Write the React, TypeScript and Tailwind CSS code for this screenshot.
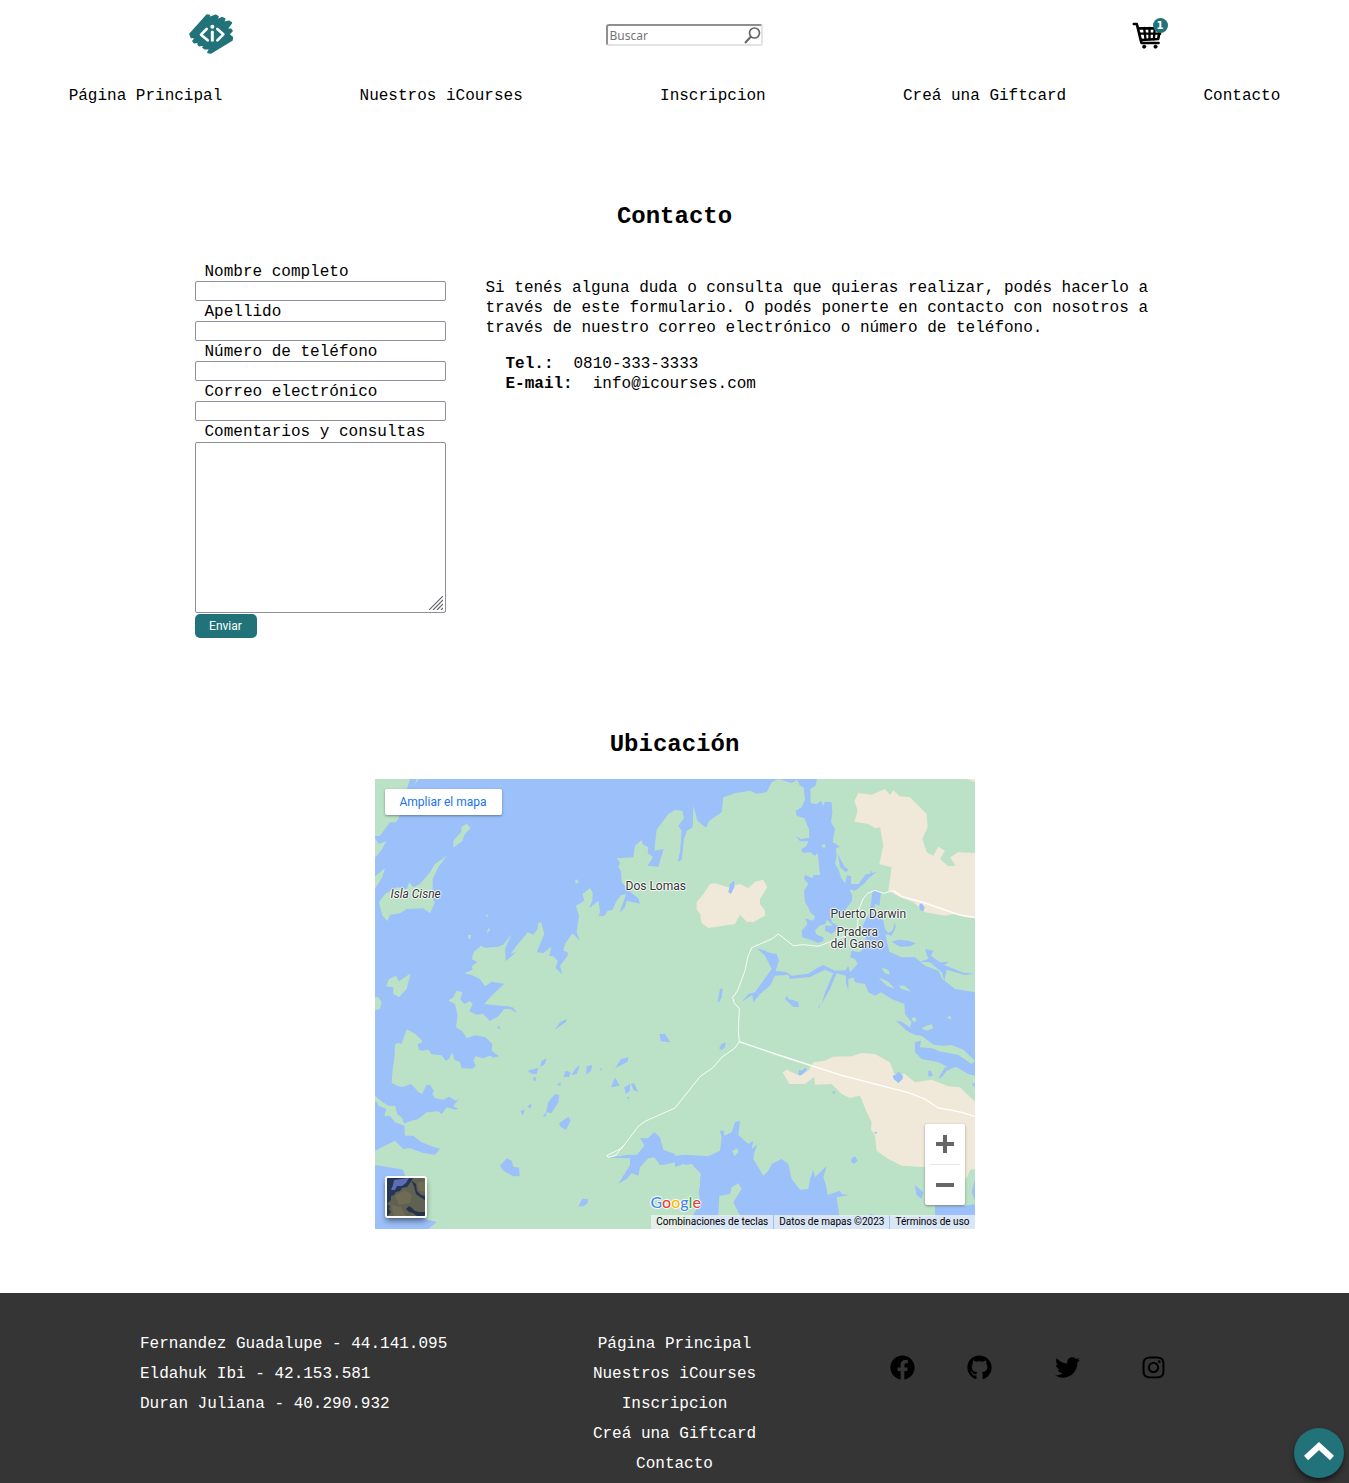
import React from "react";
import { FaFacebook, FaGithub, FaInstagram, FaTwitter } from "react-icons/fa";

const links = ["Página Principal", "Nuestros iCourses", "Inscripcion", "Creá una Giftcard", "Contacto"];
const authors = [
  "Fernandez Guadalupe - 44.141.095",
  "Eldahuk Ibi - 42.153.581",
  "Duran Juliana - 40.290.932",
];
const fields = [
  { id: "nombre", label: "Nombre completo", type: "text" },
  { id: "apellido", label: "Apellido", type: "text" },
  { id: "telefono", label: "Número de teléfono", type: "tel" },
  { id: "correo", label: "Correo electrónico", type: "email" },
];

function Logo() {
  return (
    <svg viewBox="45 30 156 150" className="h-[50px] w-[52px]" aria-hidden="true">
      <path
        d="M60 102 L111 45 L118 47 L113 55 L137 46 L144 50 L136 62 L156 53 L164 56 L160 68 L178 64 L184 69 L170 88 L183 88 L186 93 L176 103 L187 112 L186 120 L122 159 L114 157 L122 145 L104 146 L99 142 L108 133 L88 137 L84 132 L91 125 L73 128 L69 123 L78 112 L64 112Z"
        fill="#217379"
        stroke="#217379"
        strokeWidth="5"
        strokeLinejoin="round"
      />
      <g fill="none" stroke="#fff" strokeWidth="8" strokeLinecap="round" strokeLinejoin="round">
        <path d="M110 87 L93 104 L113 121" />
        <path d="M142 87 L160 103 L142 121" />
        <path d="M127 96 V121" strokeWidth="9" />
      </g>
      <circle cx="127" cy="80" r="6" fill="#fff" />
    </svg>
  );
}

function CartIcon() {
  return (
    <svg viewBox="64 52 92 84" className="h-7 w-[31px]" aria-hidden="true" fill="none" stroke="#000" strokeLinecap="round" strokeLinejoin="round">
      <path d="M69 58 H78 L90 107 L92 115 H143" strokeWidth="8" />
      <path d="M83 71 H148 L142 103 L91 106" strokeWidth="8" />
      <path d="M85 87 H148 M100 70 L104 104 M116 70 V104 M132 70 L129 104" strokeWidth="7" />
      <circle cx="100" cy="126" r="5" fill="#000" strokeWidth="2" />
      <circle cx="134" cy="126" r="5" fill="#000" strokeWidth="2" />
    </svg>
  );
}

const water = [
  // open sea along the west coast
  "M105 0 L90 48 L70 120 L62 130 L45 130 L15 170 L0 172 L0 178 L12 195 L34 186 L20 212 L0 236 L0 292 L30 268 L22 295 L0 328 V950 L18 966 L40 980 L60 982 L66 1005 L80 1016 L86 1034 L110 1025 L128 1021 L155 1000 L190 997 L200 1006 L215 985 L240 992 L250 989 L235 982 L253 958 L243 965 L222 953 L205 962 L180 957 L172 946 L177 935 L165 918 L154 918 L142 944 L132 941 L118 925 L108 915 L85 923 L70 922 L50 912 L53 870 L58 840 L60 797 L68 792 L80 794 L95 751 L120 764 L142 785 L138 792 L128 795 L132 812 L142 815 L160 812 L170 826 L200 829 L212 845 L222 840 L232 820 L238 842 L255 850 L260 868 L292 869 L303 860 L295 845 L302 832 L325 838 L345 830 L355 836 L372 832 L350 815 L352 795 L332 775 L300 769 L275 778 L262 757 L243 745 L248 710 L240 675 L220 665 L235 655 L245 635 L262 640 L256 662 L268 675 L285 667 L293 675 L283 697 L305 707 L324 704 L344 726 L370 712 L388 690 L405 690 L425 702 L415 686 L400 682 L375 680 L328 675 L350 650 L388 614 L350 608 L330 622 L315 600 L292 589 L268 583 L293 572 L290 562 L307 550 L290 540 L297 518 L318 500 L330 506 L370 503 L385 497 L410 465 L390 508 L392 547 L424 518 L406 526 L425 500 L458 460 L475 467 L488 450 L490 432 L498 430 L508 465 L485 520 L505 522 L530 503 L522 530 L535 532 L548 545 L542 568 L562 586 L555 560 L578 530 L578 520 L565 515 L570 495 L592 463 L615 485 L605 460 L612 410 L603 380 L628 365 L622 345 L645 328 L653 340 L652 365 L642 388 L670 365 L675 395 L672 412 L688 411 L698 395 L712 393 L725 365 L738 348 L753 346 L745 370 L733 402 L750 385 L755 365 L795 374 L790 358 L770 342 L740 310 L738 275 L730 265 L735 250 L725 238 L775 235 L780 200 L800 183 L803 196 L820 205 L818 222 L834 234 L818 260 L850 263 L866 210 L838 215 L845 152 L880 105 L900 93 L922 95 L927 118 L910 140 L920 155 L915 220 L908 248 L920 242 L927 180 L935 155 L953 145 L955 80 L967 125 L993 146 L1003 125 L1040 100 L1045 55 L1082 42 L1125 35 L1145 44 L1175 40 L1190 10 L1210 0 L1250 12 L1270 0Z",
  // central fjord
  "M1265 0 L1275 20 L1286 25 L1290 62 L1280 85 L1262 95 L1265 110 L1288 118 L1302 150 L1303 176 L1278 180 L1262 170 L1275 187 L1300 187 L1295 200 L1278 212 L1285 222 L1306 220 L1320 230 L1328 222 L1335 288 L1315 288 L1313 298 L1290 288 L1287 300 L1300 315 L1287 335 L1290 370 L1300 385 L1305 400 L1320 412 L1315 425 L1290 418 L1298 435 L1280 455 L1282 475 L1315 485 L1330 492 L1345 485 L1345 475 L1325 467 L1320 455 L1333 440 L1350 435 L1357 422 L1375 440 L1350 440 L1350 455 L1370 465 L1395 443 L1370 430 L1370 408 L1400 407 L1430 367 L1432 350 L1420 325 L1400 300 L1390 270 L1380 255 L1385 230 L1383 208 L1395 203 L1383 195 L1373 190 L1380 150 L1368 130 L1372 100 L1370 70 L1350 68 L1345 80 L1338 65 L1325 76 L1307 72 L1306 30 L1322 20 L1326 0Z",
  "M1388 225 L1408 262 L1420 272 L1413 280 L1395 265Z",
  "M1410 315 L1416 288 L1428 292 L1428 315 L1450 315 L1473 285 L1485 285 L1488 272 L1491 282 L1505 278 L1480 298 L1470 312 L1440 335 L1420 330Z",
  // southeastern bay and its channels
  "M1493 335 L1518 340 L1513 380 L1500 375 L1495 400 L1525 425 L1530 450 L1540 462 L1552 455 L1560 430 L1562 445 L1550 470 L1532 465 L1535 485 L1543 518 L1580 535 L1620 535 L1650 560 L1690 575 L1702 600 L1740 630 L1800 640 V890 L1780 885 L1745 865 L1720 865 L1690 850 L1640 840 L1620 820 L1620 790 L1638 785 L1635 805 L1670 808 L1705 820 L1640 770 L1605 745 L1610 730 L1590 705 L1588 675 L1550 660 L1518 640 L1500 650 L1480 640 L1470 615 L1440 610 L1435 595 L1420 600 L1420 635 L1413 612 L1413 590 L1385 583 L1365 630 L1340 675 L1350 640 L1375 583 L1350 572 L1305 594 L1265 598 L1245 600 L1240 587 L1200 590 L1185 620 L1155 645 L1135 670 L1132 648 L1100 668 L1120 645 L1140 640 L1190 570 L1170 530 L1145 508 L1170 515 L1185 522 L1205 525 L1212 545 L1202 575 L1235 580 L1250 590 L1300 584 L1325 568 L1345 558 L1380 575 L1412 574 L1420 560 L1425 580 L1448 555 L1440 540 L1425 535 L1430 515 L1455 520 L1475 495 L1463 440 L1485 395Z",
  "M1550 488 L1570 482 L1600 485 L1623 493 L1605 502 L1575 503Z",
  "M1650 510 L1675 515 L1668 530 L1695 550 L1722 548 L1707 558 L1730 567 L1765 581 L1800 584 L1770 588 L1715 572 L1708 605 L1700 580 L1665 550 L1635 548 L1660 540Z",
  // southern bay
  "M900 1130 L930 1127 L1000 1132 L1035 1115 L1040 1075 L1035 1055 L1047 1055 L1048 1070 L1070 1060 L1080 1030 L1095 1025 L1090 1068 L1120 1095 L1135 1085 L1130 1110 L1148 1095 L1138 1120 L1135 1140 L1165 1190 L1180 1175 L1190 1155 L1220 1140 L1240 1155 L1250 1200 L1275 1232 L1300 1230 L1305 1200 L1315 1172 L1320 1195 L1355 1160 L1345 1195 L1352 1215 L1358 1248 L1395 1235 L1400 1245 L1422 1248 L1385 1255 L1393 1310 L1480 1310 L1490 1304 L1500 1310 L1540 1310 L1580 1315 L1682 1310 V1350 H950 L950 1315 L965 1290 L975 1265 L970 1230 L978 1185 L950 1155 L900 1165Z",
  "M700 1136 L760 1127 L785 1128 L808 1100 L795 1077 L818 1078 L838 1060 L855 1075 L865 1112 L900 1125 V1150 L868 1157 L855 1158 L838 1135 L820 1138 L795 1165 L790 1190 L770 1182 L755 1200 L730 1214 L765 1158 L765 1138Z",
  "M0 1115 L60 1085 L85 1110 L105 1108 L145 1122 L180 1127 L195 1109 L170 1102 L140 1090 L115 1070 L90 1070 L88 1040 L60 1030 L45 1010 L30 1010 L34 990 L0 965Z",
  "M0 1158 L75 1170 L85 1173 L100 1230 L150 1320 L185 1329 L160 1350 H0Z",
  "M1680 1280 H1770 L1800 1275 V1350 H1680Z",
  // lakes
  "M375 1160 L395 1138 L410 1145 L415 1163 L432 1166 L434 1192 L415 1192 L385 1175Z",
  "M513 1000 L520 970 L540 945 L553 948 L550 970 L530 1002Z",
  "M552 1033 L580 1013 L587 1025 L573 1052 L557 1044Z",
  "M610 1282 L622 1259 L638 1260 L638 1273 L625 1282Z",
  "M458 875 L490 866 L485 885 L472 885Z M495 865 L500 845 L515 838 L510 855Z M475 895 L483 895 L482 905 L475 905Z",
  "M565 893 L572 875 L587 880 L582 895Z M590 888 L600 870 L615 858 L605 885Z M545 917 L558 908 L556 920Z",
  "M634 887 L635 862 L652 858 L648 875Z M720 868 L738 840 L760 835 L758 848Z M708 925 L720 895 L734 920Z",
  "M748 925 L765 915 L765 935 L752 945Z M768 915 L777 912 L790 940 L775 932Z M755 953 L764 955 L760 962Z",
  "M540 752 L555 730 L575 720 L573 729Z M853 765 L870 765 L886 790 L858 787Z M436 997 L450 991 L443 1010Z M457 982 L470 973 L466 990Z M503 1013 L514 998 L513 1012Z M675 869 L682 867 L678 877Z M365 747 L372 740 L377 750Z",
  "M1060 340 L1065 315 L1078 305 L1078 325 L1068 345Z M1632 378 L1640 373 L1649 385 L1645 397 L1635 393Z",
  "M1028 668 L1035 630 L1043 628 L1040 655 L1032 670Z M1230 660 L1237 650 L1240 660 L1270 668 L1272 684 L1255 684Z M1330 685 L1338 672 L1332 688Z",
  "M1032 808 L1040 795 L1052 790 L1050 805 L1040 813Z M1270 888 L1272 872 L1280 875 L1293 865 L1295 872 L1280 888Z M1372 937 L1382 937 L1376 947Z",
  "M1553 890 L1565 885 L1570 877 L1584 890 L1583 900 L1570 912 L1556 900Z M1660 875 L1668 875 L1673 890 L1660 893Z M1690 898 L1710 865 L1745 862 L1715 875 L1700 895Z",
  "M1563 725 L1580 728 L1608 748 L1630 760 L1642 770 L1620 768 L1595 755Z M1430 1138 L1440 1132 L1448 1145 L1438 1155 L1428 1148Z M1497 1060 L1507 1058 L1502 1066Z M1619 1218 L1645 1240 L1640 1260 L1625 1248Z",
  "M1800 1200 L1790 1240 L1800 1265Z M1790 915 L1800 912 V925Z",
];

const land = [
  "M12 370 L30 345 L65 325 L95 330 L103 310 L115 325 L135 315 L165 280 L180 255 L215 230 L190 265 L173 300 L173 360 L180 370 L165 403 L145 388 L95 390 L75 403 L45 407 L37 426 L22 410Z",
  "M235 206 L235 185 L258 160 L260 143 L275 134 L287 147 L270 165 L262 185Z",
  "M33 622 L42 600 L63 590 L72 607 L107 583 L95 630 L72 654 L55 645 L55 625Z",
  "M120 15 L125 0 L132 0Z M0 655 L10 655 L20 670 L15 690 L0 694Z M600 305 L607 301 L611 312 L602 313Z M280 468 L288 468 L287 480 L280 478Z M331 410 L340 406 L337 414Z M335 463 L340 447 L346 452Z",
  "M900 1165 L925 1155 L950 1165 L975 1185 L975 1220 L962 1265 L950 1300 L955 1350 H900Z",
  "M1030 1310 L1033 1250 L1065 1245 L1070 1225 L1090 1213 L1100 1230 L1075 1270 L1095 1310Z M1072 1115 L1087 1108 L1090 1120 L1078 1132Z",
  "M1518 565 L1540 573 L1545 587 L1530 583Z M1510 595 L1540 608 L1560 630 L1535 620Z M1570 620 L1590 620 L1608 638 L1580 630Z M1340 198 L1350 194 L1352 205 L1343 206Z M1400 545 L1412 540 L1408 555Z",
  "M1610 718 L1620 714 L1625 725 L1615 730Z M1655 740 L1670 735 L1675 748 L1655 755 L1640 748Z M1715 715 L1727 711 L1728 722Z",
  "M1660 795 L1700 800 L1730 798 L1765 812 L1800 845 L1790 855 L1750 828 L1690 816Z",
  "M0 950 L20 970 L40 982 L60 980 L66 1005 L82 1018 L88 1037 L72 1030 L60 1010 L28 1010 L35 990 L10 980Z",
];

const sand = [
  "M965 370 L985 345 L1005 315 L1020 313 L1060 325 L1095 315 L1120 328 L1140 308 L1165 302 L1177 325 L1155 360 L1155 375 L1170 395 L1170 410 L1135 430 L1115 428 L1095 407 L1080 435 L1045 440 L1000 447 L980 432 L975 405 L965 390Z",
  "M1438 65 L1450 42 L1490 47 L1530 30 L1545 48 L1555 34 L1575 52 L1605 55 L1655 105 L1658 145 L1642 180 L1655 220 L1675 230 L1690 203 L1710 215 L1695 240 L1720 262 L1742 260 L1725 235 L1750 220 L1800 222 V418 L1770 415 L1740 405 L1710 410 L1650 400 L1615 370 L1575 355 L1540 335 L1550 265 L1513 255 L1525 200 L1515 145 L1500 148 L1480 135 L1438 128 L1448 95Z",
  "M1223 880 L1235 872 L1275 890 L1300 875 L1315 850 L1350 845 L1375 833 L1430 832 L1460 822 L1500 825 L1545 850 L1558 885 L1590 885 L1620 910 L1670 902 L1720 922 L1755 925 L1800 968 V1170 L1785 1172 L1775 1200 L1745 1170 L1580 1160 L1540 1140 L1505 1115 L1500 1070 L1488 1050 L1490 1030 L1475 1000 L1455 950 L1425 957 L1400 945 L1370 915 L1320 917 L1318 893 L1290 915 L1243 915Z",
  "M1775 0 H1800 V10Z",
];

const mainRoads = [
  "M1800 415 L1750 407 L1650 372 L1580 352 L1555 335",
  "M1093 788 L1210 828 L1400 889 L1600 941 L1650 960 L1690 987 L1720 992 L1760 1000 L1800 1012",
];
const minorRoad =
  "M1555 335 L1525 343 L1500 334 L1478 343 L1465 358 L1450 395 L1448 440 L1440 460 L1400 475 L1330 502 L1285 497 L1255 500 L1210 465 L1190 480 L1130 506 L1118 535 L1110 575 L1088 635 L1073 655 L1078 673 L1093 688 L1090 755 L1093 788 L1080 807 L1040 835 L1015 865 L975 893 L900 987 L810 1027 L790 1042 L740 1108 L695 1130 L700 1135 L722 1129 L745 1100";

function MapArt() {
  return (
    <svg viewBox="0 0 1800 1350" className="block h-full w-full" preserveAspectRatio="xMidYMid slice" role="img" aria-label="Mapa de Puerto Darwin">
      <rect width="1800" height="1350" fill="#bbe2c6" />
      {sand.map((d) => <path key={d} d={d} fill="#f0e8d8" />)}
      {water.map((d) => <path key={d} d={d} fill="#9cc0f9" />)}
      {land.map((d) => <path key={d} d={d} fill="#bbe2c6" />)}
      {mainRoads.map((d) => <path key={d} d={d} fill="none" stroke="#fff" strokeWidth="4" strokeLinejoin="round" />)}
      <path d={minorRoad} fill="none" stroke="#fff" strokeOpacity=".9" strokeWidth="3" strokeLinejoin="round" />
    </svg>
  );
}

function Satellite() {
  return (
    <svg viewBox="0 0 38 38" className="block h-full w-full" aria-hidden="true">
      <rect width="38" height="38" fill="#5f6153" />
      <path d="M0 0 H26 L23 5 L20 9 L15 10 L13 13 L9 14 L7 17 L4 18 L4 22 L0 26Z" fill="#263557" />
      <path d="M7 2 L22 0 L19 5 L15 8 L10 8 L8 12 L4 12 L6 7Z" fill="#5c6db4" />
      <path d="M24 2 L27 8 L29 16 L33 19 L38 22 V18 L34 17 L30 13 L29 6Z M19 31 L22 28 L25 30 L28 33 L32 34 L38 34 V38 H30 L26 35 L22 34Z" fill="#24334a" />
      <path d="M8 18 L18 12 L25 17 L23 25 L12 27Z M4 27 L14 29 L19 38 H7Z M30 5 L38 3 V14 L33 13Z" fill="#797257" opacity=".6" />
      <path d="M0 26 L3 28 L2 31 L4 34 L1 38 H0Z" fill="#29364a" />
    </svg>
  );
}

const halo = "[text-shadow:1px_0_1px_#fff,-1px_0_1px_#fff,0_1px_1px_#fff,0_-1px_1px_#fff]";

function LocationMap() {
  return (
    <div className="relative mx-auto mt-5 h-[450px] w-full max-w-[600px] overflow-hidden font-[Roboto,sans-serif] text-[12px] leading-3 text-[#333]">
      <MapArt />
      <a href="#mapa" className="absolute left-2.5 top-2.5 rounded-xs bg-white px-[15px] py-[7px] text-[#1a73e8] shadow-sm shadow-black/30">
        Ampliar el mapa
      </a>
      <span className={`absolute left-4 top-[109px] italic ${halo}`}>Isla Cisne</span>
      <span className={`absolute left-[251px] top-[101px] ${halo}`}>Dos Lomas</span>
      <span className={`absolute left-[456px] top-[129px] ${halo}`}>Puerto Darwin</span>
      <span className={`absolute left-[456px] top-[147px] text-center ${halo}`}>
        Pradera
        <br />
        del Ganso
      </span>
      <button aria-label="Vista satelital" className="absolute bottom-[11px] left-2.5 size-[42px] overflow-hidden rounded-[3px] border-2 border-white shadow-md shadow-black/40">
        <Satellite />
      </button>
      <div className="absolute bottom-6 right-2.5 flex w-10 flex-col rounded-xs bg-white px-[5px] shadow-sm shadow-black/30">
        <button aria-label="Acercar" className="flex h-10 items-center justify-center">
          <svg viewBox="0 0 18 18" className="size-[18px]" aria-hidden="true"><path d="M9 0V18M0 9H18" stroke="#666" strokeWidth="4" /></svg>
        </button>
        <button aria-label="Alejar" className="flex h-[41px] items-center justify-center border-t border-[#e6e6e6]">
          <svg viewBox="0 0 18 18" className="size-[18px]" aria-hidden="true"><path d="M0 9H18" stroke="#666" strokeWidth="4" /></svg>
        </button>
      </div>
      <span className={`absolute bottom-[18px] left-[276px] font-[Lato,sans-serif] text-[16px] font-medium leading-[18px] ${halo}`}>
        <span className="text-[#4285f4]">G</span>
        <span className="text-[#ea4335]">o</span>
        <span className="text-[#fbbc04]">o</span>
        <span className="text-[#4285f4]">g</span>
        <span className="text-[#34a853]">l</span>
        <span className="text-[#ea4335]">e</span>
      </span>
      <div className="absolute bottom-0 right-0 flex gap-px text-[10px] leading-[14px] text-black">
        <button className="bg-[#f5f5f5]/70 px-[5px]">Combinaciones de teclas</button>
        <span className="bg-[#f5f5f5]/70 px-[5px]">Datos de mapas ©2023</span>
        <a href="#terminos" className="bg-[#f5f5f5]/70 px-[5px]">Términos de uso</a>
      </div>
    </div>
  );
}

function Header() {
  return (
    <header>
      <div className="flex h-[70px] items-center justify-around">
        <a href="#inicio" aria-label="iCourses"><Logo /></a>
        <div className="relative w-[157px]">
          <input
            type="search"
            aria-label="Buscar"
            placeholder="Buscar"
            className="block h-[22px] w-full rounded-[3px] border-2 border-b-[#e3e3e3] border-l-[#8f8f8f] border-r-[#e3e3e3] border-t-[#8f8f8f] px-0.5 font-['Noto_Sans',sans-serif] text-[12px] leading-4 placeholder:text-[#757575]"
          />
          <svg viewBox="0 0 17 17" className="absolute right-0.5 top-[3px] size-[17px]" fill="none" stroke="#666" strokeWidth="1.7" aria-hidden="true">
            <circle cx="10.5" cy="6" r="5" />
            <path d="M7 9.500 L1 16" strokeWidth="2" />
          </svg>
        </div>
        <a href="#carrito" aria-label="Carrito" className="relative w-[33px] pt-0.5">
          <CartIcon />
          <span className="absolute -right-[3px] -top-0.5 flex size-[15px] items-center justify-center rounded-full bg-[#217379] font-['DejaVu_Sans',sans-serif] text-[10px] font-bold leading-none text-white">1</span>
        </a>
      </div>
      <nav className="flex h-[52px] items-center justify-around">
        {links.map((t) => <a key={t} href="#seccion">{t}</a>)}
      </nav>
    </header>
  );
}

export default function App() {
  return (
    <div className="bg-white font-['Liberation_Mono',monospace] text-[16px] leading-5 text-black">
      <Header />
      <main>
        <section>
          <h1 className="pt-[81px] text-center text-[24px] font-bold leading-7">Contacto</h1>
          <div className="mx-auto mt-[31px] flex max-w-[960px] gap-10">
            <form className="w-[251px] shrink-0">
              {fields.map((f) => (
                <React.Fragment key={f.id}>
                  <label htmlFor={f.id} className="block h-[19px] pl-2.5">{f.label}</label>
                  <input id={f.id} type={f.type} className="mb-px block h-5 w-full rounded-xs border border-[#8f8f9d] px-1 text-[13px]" />
                </React.Fragment>
              ))}
              <label htmlFor="comentarios" className="block h-5 pl-2.5">Comentarios y consultas</label>
              <div className="relative">
                <textarea id="comentarios" className="block h-[171px] w-full resize-none rounded-xs border border-[#8f8f9d] p-0.5 text-[13px]" />
                <svg viewBox="0 0 14 14" className="pointer-events-none absolute bottom-[3px] right-[3px] size-[14px]" stroke="#666" strokeWidth="1.2" aria-hidden="true">
                  <path d="M0 14L14 0M4 14L14 4M8 14L14 8M12 14L14 12" />
                </svg>
              </div>
              <button type="submit" className="mt-px h-6 w-[62px] rounded-[5px] bg-[#217379] font-[Roboto,sans-serif] text-[12px] leading-4 text-white">Enviar</button>
            </form>
            <div className="pt-4">
              <p>
                Si tenés alguna duda o consulta que quieras realizar, podés hacerlo a través de este formulario. O podés
                ponerte en contacto con nosotros a través de nuestro correo electrónico o número de teléfono.
              </p>
              <ul className="mt-4 pl-5">
                <li className="flex gap-5"><strong>Tel.:</strong>0810-333-3333</li>
                <li className="flex gap-5"><strong>E-mail:</strong>info@icourses.com</li>
              </ul>
            </div>
          </div>
        </section>
        <section className="pb-16">
          <h2 className="pt-[93px] text-center text-[24px] font-bold leading-7">Ubicación</h2>
          <LocationMap />
        </section>
      </main>
      <footer className="grid grid-cols-3 bg-[#353535] px-[140px] pb-1 pt-9 text-white">
        <ul className="whitespace-nowrap leading-[30px]">
          {authors.map((a) => <li key={a}>{a}</li>)}
        </ul>
        <nav className="flex flex-col items-center leading-[30px]">
          {links.map((t) => <a key={t} href="#seccion">{t}</a>)}
        </nav>
        <div className="flex h-[76px] items-center pl-[37px] text-[25px] text-black">
          <a href="#facebook" aria-label="Facebook" className="mr-[52px]"><FaFacebook /></a>
          <a href="#github" aria-label="GitHub" className="mr-[63px]"><FaGithub /></a>
          <a href="#twitter" aria-label="Twitter" className="mr-[61px]"><FaTwitter /></a>
          <a href="#instagram" aria-label="Instagram"><FaInstagram /></a>
        </div>
      </footer>
      <button aria-label="Volver arriba" className="fixed bottom-[5px] right-[5px] flex size-[50px] items-center justify-center rounded-full bg-[#217379] shadow-md shadow-black/50">
        <svg viewBox="0 0 30 20" className="mb-1 h-5 w-[30px]" fill="none" stroke="#fff" strokeWidth="6" aria-hidden="true">
          <path d="M2 17L15 5L28 17" />
        </svg>
      </button>
    </div>
  );
}
